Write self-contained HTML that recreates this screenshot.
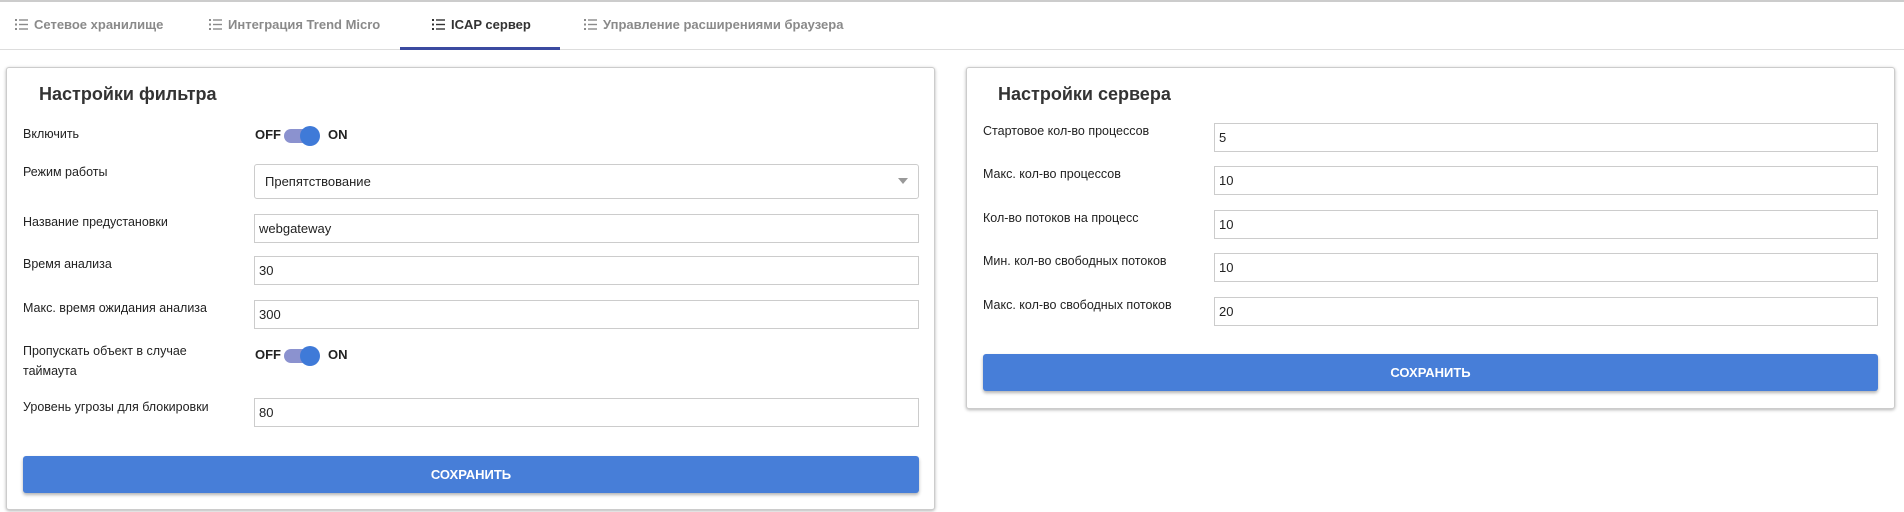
<!DOCTYPE html>
<html><head><meta charset="utf-8"><style>
*{box-sizing:border-box;margin:0;padding:0}
body{width:1904px;height:512px;background:#fff;font-family:"Liberation Sans",sans-serif;color:#333;position:relative;overflow:hidden}
.a{position:absolute}
.tab{position:absolute;top:17px;font-size:13px;font-weight:bold;color:#8a8a8a;white-space:nowrap}
.tab.act{color:#333}
.ic{display:inline-block;width:13px;height:11px;vertical-align:-1px;margin-right:6px}
.panel{position:absolute;background:#fff;border:1px solid #ccc;border-radius:3px;box-shadow:0 1px 3px rgba(0,0,0,.3)}
.title{position:absolute;font-size:18px;font-weight:bold;color:#333}
.lbl{position:absolute;font-size:12.5px;color:#222;line-height:20px}
.inp{position:absolute;border:1px solid #ccc;height:29px;font-size:13px;padding:6px 4px;color:#222}
.btn{position:absolute;background:#477ed8;color:#fff;font-size:13px;font-weight:bold;text-align:center;border-radius:3px;box-shadow:0 2px 3px rgba(0,0,0,.3)}
.tg{position:absolute;font-size:13px;font-weight:bold;color:#222}
.track{position:absolute;width:34px;height:14px;border-radius:7px;background:#8b92cf}
.knob{position:absolute;width:20px;height:20px;border-radius:50%;background:#3f7ad8}
</style></head><body>
<div class="a" style="left:0;top:0;width:1904px;height:2px;background:#ccc"></div>
<div class="a" style="left:0;top:49px;width:1904px;height:1px;background:#ddd"></div>
<div class="a" style="left:400px;top:47px;width:160px;height:3px;background:#3b4aa0"></div>
<svg width="0" height="0" style="position:absolute"><defs><g id="li"><rect x="0" y="0" width="2" height="2"/><rect x="0" y="4.5" width="2" height="2"/><rect x="0" y="9" width="2" height="2"/><rect x="4" y="0.3" width="9" height="1.4"/><rect x="4" y="4.8" width="9" height="1.4"/><rect x="4" y="9.3" width="9" height="1.4"/></g></defs></svg>
<div class="tab" style="left:15px"><svg class="ic" fill="#8a8a8a"><use href="#li"/></svg>Сетевое хранилище</div>
<div class="tab" style="left:209px"><svg class="ic" fill="#8a8a8a"><use href="#li"/></svg>Интеграция Trend Micro</div>
<div class="tab act" style="left:432px"><svg class="ic" fill="#333"><use href="#li"/></svg>ICAP сервер</div>
<div class="tab" style="left:584px"><svg class="ic" fill="#8a8a8a"><use href="#li"/></svg>Управление расширениями браузера</div>

<div class="panel" style="left:6px;top:67px;width:929px;height:443px"></div>
<div class="title" style="left:39px;top:84px">Настройки фильтра</div>
<div class="lbl" style="left:23px;top:124px">Включить</div>
<div class="tg" style="left:255px;top:127px">OFF</div><div class="track" style="left:284px;top:129px"></div><div class="knob" style="left:300px;top:126px"></div><div class="tg" style="left:328px;top:127px">ON</div>
<div class="lbl" style="left:23px;top:162px">Режим работы</div>
<div class="inp" style="left:254px;top:164px;width:665px;height:35px;border-radius:3px;padding:9px 10px">Препятствование<span style="position:absolute;right:10px;top:13px;width:0;height:0;border-left:5px solid transparent;border-right:5px solid transparent;border-top:6px solid #999"></span></div>
<div class="lbl" style="left:23px;top:212px">Название предустановки</div>
<div class="inp" style="left:254px;top:214px;width:665px">webgateway</div>
<div class="lbl" style="left:23px;top:254px">Время анализа</div>
<div class="inp" style="left:254px;top:256px;width:665px">30</div>
<div class="lbl" style="left:23px;top:298px">Макс. время ожидания анализа</div>
<div class="inp" style="left:254px;top:300px;width:665px">300</div>
<div class="lbl" style="left:23px;top:341px">Пропускать объект в случае<br>таймаута</div>
<div class="tg" style="left:255px;top:347px">OFF</div><div class="track" style="left:284px;top:349px"></div><div class="knob" style="left:300px;top:346px"></div><div class="tg" style="left:328px;top:347px">ON</div>
<div class="lbl" style="left:23px;top:397px">Уровень угрозы для блокировки</div>
<div class="inp" style="left:254px;top:398px;width:665px">80</div>
<div class="btn" style="left:23px;top:456px;width:896px;height:37px;line-height:37px">СОХРАНИТЬ</div>

<div class="panel" style="left:966px;top:67px;width:929px;height:342px"></div>
<div class="title" style="left:998px;top:84px">Настройки сервера</div>
<div class="lbl" style="left:983px;top:121px">Стартовое кол-во процессов</div>
<div class="inp" style="left:1214px;top:123px;width:664px">5</div>
<div class="lbl" style="left:983px;top:164px">Макс. кол-во процессов</div>
<div class="inp" style="left:1214px;top:166px;width:664px">10</div>
<div class="lbl" style="left:983px;top:208px">Кол-во потоков на процесс</div>
<div class="inp" style="left:1214px;top:210px;width:664px">10</div>
<div class="lbl" style="left:983px;top:251px">Мин. кол-во свободных потоков</div>
<div class="inp" style="left:1214px;top:253px;width:664px">10</div>
<div class="lbl" style="left:983px;top:295px">Макс. кол-во свободных потоков</div>
<div class="inp" style="left:1214px;top:297px;width:664px">20</div>
<div class="btn" style="left:983px;top:354px;width:895px;height:37px;line-height:37px">СОХРАНИТЬ</div>
</body></html>
